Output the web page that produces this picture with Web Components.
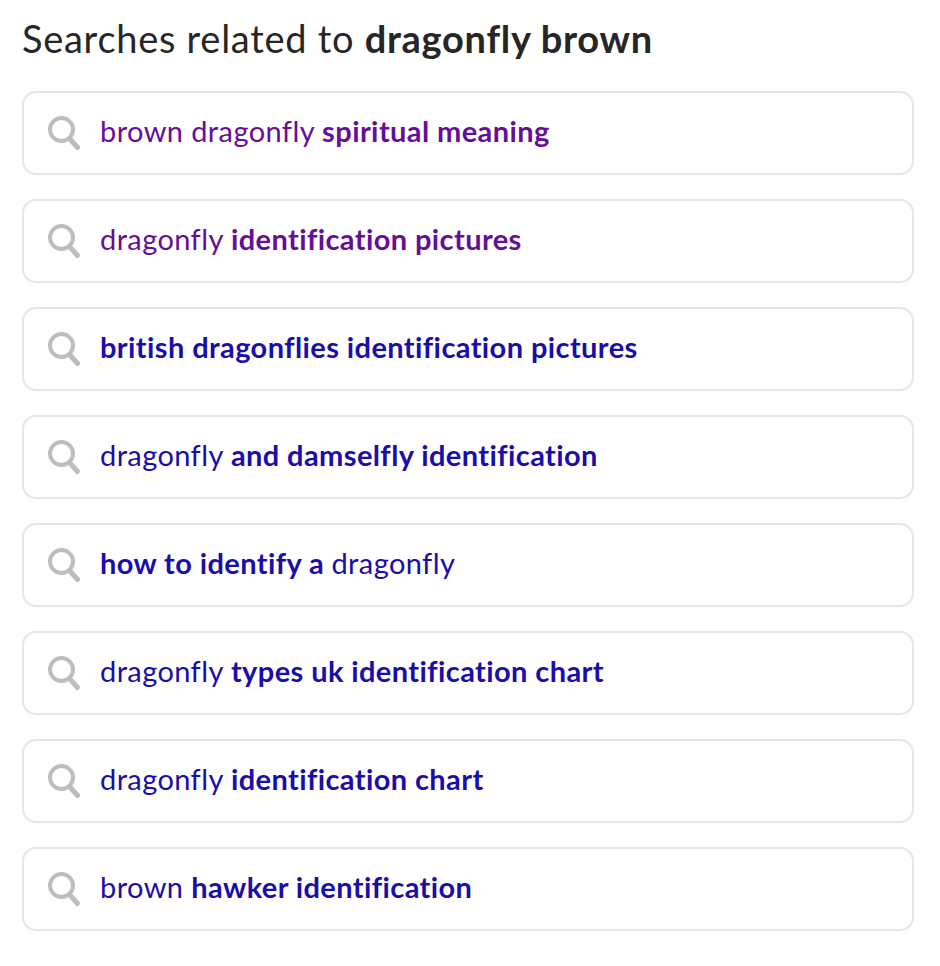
<!DOCTYPE html>
<html>
<head>
<meta charset="utf-8">
<style>
  html, body { margin: 0; background: #fff; }
  body { font-family: Lato, "Liberation Sans", sans-serif; font-variant-ligatures: none; }
</style>
</head>
<body>
<related-searches query="dragonfly brown">
  <search-row visited><span>brown dragonfly </span><b>spiritual meaning</b></search-row>
  <search-row visited><span>dragonfly </span><b>identification pictures</b></search-row>
  <search-row><b>british dragonflies identification pictures</b></search-row>
  <search-row><span>dragonfly </span><b>and damselfly identification</b></search-row>
  <search-row><b>how to identify a </b><span>dragonfly</span></search-row>
  <search-row><span>dragonfly </span><b>types uk identification chart</b></search-row>
  <search-row><span>dragonfly </span><b>identification chart</b></search-row>
  <search-row><span>brown </span><b>hawker identification</b></search-row>
</related-searches>
<script>
class RelatedSearches extends HTMLElement {
  constructor() {
    super();
    this.attachShadow({ mode: "open" });
    const query = this.getAttribute("query") || "";
    this.shadowRoot.innerHTML = `
      <style>
        :host {
          display: block;
          width: 892px;
          padding: 16px 26px 0 22px;
        }
        h2 {
          margin: 0 0 31px;
          font-size: 38px;
          line-height: 44px;
          font-weight: 400;
          color: #262626;
          letter-spacing: 0.72px;
        }
        b { font-weight: 700; }
        .list {
          display: flex;
          flex-direction: column;
          gap: 24px;
        }
      </style>
      <h2>Searches related to <b>${query}</b></h2>
      <div class="list"><slot></slot></div>
    `;
  }
}

class SearchRow extends HTMLElement {
  constructor() {
    super();
    this.attachShadow({ mode: "open" });
    this.shadowRoot.innerHTML = `
      <style>
        :host {
          display: flex;
          align-items: center;
          box-sizing: border-box;
          height: 84px;
          padding-left: 24px;
          border: 2px solid #e6e6e6;
          border-radius: 14px;
          font-size: 29px;
          color: #1a0dab;
          white-space: pre;
          letter-spacing: 0.4px;
        }
        :host([visited]) { color: #660e99; }
        svg { flex: none; width: 34px; height: 36px; margin-right: 18px; }
        .label { margin-bottom: 6px; }
      </style>
      <svg viewBox="0 0 34 36" fill="none" stroke="#bdbdbd" stroke-width="4">
        <circle cx="13.5" cy="14.5" r="11.5"/>
        <path d="M22 24 L29.5 32.5" stroke-width="5" stroke-linecap="round"/>
      </svg>
      <div class="label"><slot></slot></div>
    `;
  }
}

customElements.define("related-searches", RelatedSearches);
customElements.define("search-row", SearchRow);
</script>
</body>
</html>
